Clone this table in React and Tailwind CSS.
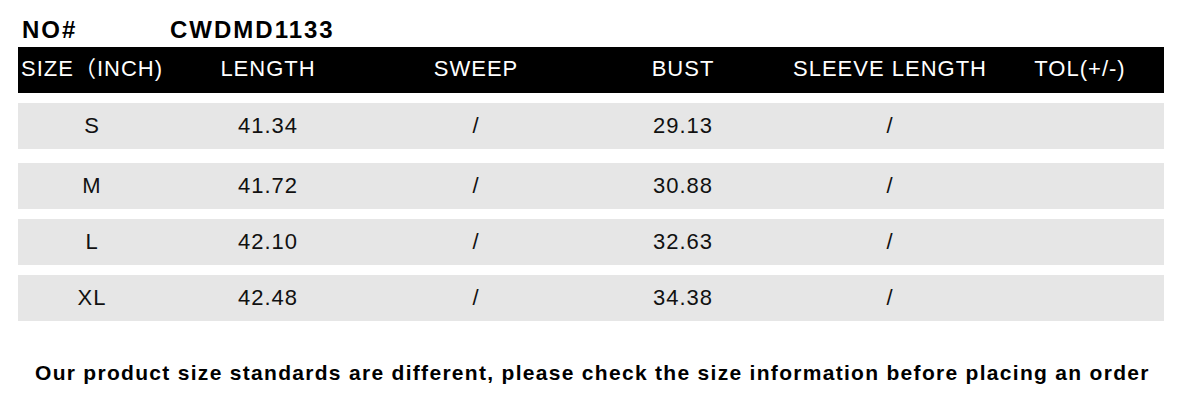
const COLS = [
  { w: "w-[148px]" },
  { w: "w-[204px]" },
  { w: "w-[212px]" },
  { w: "w-[202px]" },
  { w: "w-[212px]" },
  { w: "w-[168px]" },
];

const HEADERS = ["SIZE（INCH)", "LENGTH", "SWEEP", "BUST", "SLEEVE LENGTH", "TOL(+/-)"];

const ROWS = [
  { gap: "mt-[10px]", cells: ["S", "41.34", "/", "29.13", "/", ""] },
  { gap: "mt-[14px]", cells: ["M", "41.72", "/", "30.88", "/", ""] },
  { gap: "mt-[10px]", cells: ["L", "42.10", "/", "32.63", "/", ""] },
  { gap: "mt-[10px]", cells: ["XL", "42.48", "/", "34.38", "/", ""] },
];

const Row = ({ cells, header, className = "" }) => (
  <div
    className={
      header
        ? "flex h-[46px] items-center bg-black pb-[4px] text-white"
        : `flex h-[46px] items-center bg-[#e6e6e6] pb-[2px] text-[#111] ${className}`
    }
  >
    {cells.map((c, i) => (
      <div
        key={i}
        className={`${COLS[i].w} shrink-0 whitespace-nowrap text-center text-[22px] tracking-[1px]`}
      >
        {c}
      </div>
    ))}
  </div>
);

const App = () => {
  return (
    <div
      className="h-[404px] w-[1185px] overflow-hidden bg-white"
      style={{ fontFamily: '"Liberation Sans", "Noto Sans CJK SC", Arial, sans-serif' }}
    >
      <div className="flex h-[47px] items-center pl-[22px] pt-[12px] text-[24px] font-bold leading-none tracking-[2px] text-black">
        <span className="w-[148px]">NO#</span>
        <span>CWDMD1133</span>
      </div>

      <div className="ml-[18px] w-[1146px]">
        <Row cells={HEADERS} header />
        {ROWS.map((r, i) => (
          <Row key={i} cells={r.cells} className={r.gap} />
        ))}
      </div>

      <div className="mt-[36px] whitespace-nowrap pl-[35px] text-[21px] font-bold tracking-[1.3px] text-black">
        Our product size standards are different, please check the size information before placing an order
      </div>
    </div>
  );
};

export default App;
